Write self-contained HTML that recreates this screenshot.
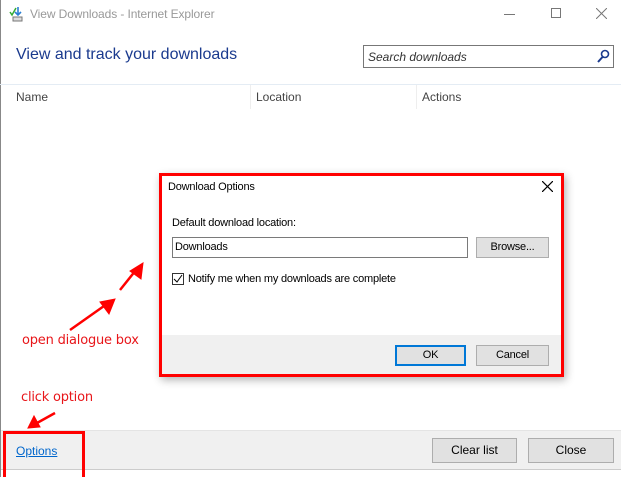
<!DOCTYPE html>
<html><head><style>
*{margin:0;padding:0;box-sizing:border-box}
body{width:621px;height:477px;background:#fff;position:relative;overflow:hidden;font-family:"Liberation Sans",sans-serif;font-size:12px;color:#000}
.a{position:absolute}
.btn{position:absolute;background:#e1e1e1;border:1px solid #adadad;text-align:center;font-size:12px}
.d{font-size:11px;letter-spacing:-0.2px}
.red{color:#e8161a;font-family:"DejaVu Sans",sans-serif;font-size:13px;letter-spacing:-0.2px}
</style></head><body>
<div class="a" style="left:0;top:0;width:1px;height:477px;background:#888"></div>
<svg class="a" style="left:9px;top:6px" width="14" height="16"><path d="M1 6l2 3 4-7" stroke="#3a3" stroke-width="1.5" fill="none"/><path d="M9 1v7M6 6l3 3 3-3" stroke="#2a7fd4" stroke-width="1.6" fill="none"/><rect x="4" y="11" width="9" height="4" fill="#ddd" stroke="#777"/></svg>
<div class="a" style="left:30px;top:7px;color:#999;font-size:12px;letter-spacing:-0.1px">View Downloads - Internet Explorer</div>
<div class="a" style="left:504px;top:14px;width:11px;height:1px;background:#777"></div>
<div class="a" style="left:551px;top:8px;width:10px;height:10px;border:1px solid #777"></div>
<svg class="a" style="left:596px;top:8px" width="11" height="11"><path d="M0 0L11 11M11 0L0 11" stroke="#777"/></svg>
<div class="a" style="left:16px;top:46px;font-size:16px;color:#1a3a8e">View and track your downloads</div>
<div class="a" style="left:363px;top:45px;width:251px;height:23px;border:1px solid #777"></div>
<div class="a" style="left:368px;top:50px;font-style:italic;color:#333">Search downloads</div>
<svg class="a" style="left:597px;top:49px" width="13" height="14"><circle cx="8" cy="5" r="3.5" stroke="#1a3a8e" stroke-width="1.6" fill="none"/><path d="M5.5 8L1 13" stroke="#1a3a8e" stroke-width="2"/></svg>
<div class="a" style="left:0;top:84px;width:621px;height:1px;background:#e4ecf4"></div>
<div class="a" style="left:16px;top:90px;color:#444">Name</div>
<div class="a" style="left:250px;top:85px;width:1px;height:24px;background:#eee"></div>
<div class="a" style="left:256px;top:90px;color:#444">Location</div>
<div class="a" style="left:416px;top:85px;width:1px;height:24px;background:#eee"></div>
<div class="a" style="left:422px;top:90px;color:#444">Actions</div>

<div class="a" style="left:159px;top:173px;width:405px;height:204px;border:3px solid #f00;background:#fff;box-shadow:2px 3px 8px rgba(0,0,0,.3)"></div>
<div class="a" style="left:162px;top:335px;width:399px;height:39px;background:#f0f0f0"></div>
<div class="a d" style="left:168px;top:181px">Download Options</div>
<svg class="a" style="left:542px;top:181px" width="11" height="11"><path d="M0 0L11 11M11 0L0 11" stroke="#000" stroke-width="1.2"/></svg>
<div class="a d" style="left:172px;top:217px">Default download location:</div>
<div class="a" style="left:172px;top:237px;width:296px;height:21px;border:1px solid #7a7a7a"></div>
<div class="a d" style="left:175px;top:241px">Downloads</div>
<div class="btn d" style="left:476px;top:237px;width:73px;height:21px;line-height:19px">Browse...</div>
<div class="a" style="left:172px;top:273px;width:12px;height:12px;border:1px solid #333"></div>
<svg class="a" style="left:173px;top:274px" width="10" height="10"><path d="M1 5l3 3 5-7" stroke="#000" fill="none"/></svg>
<div class="a d" style="left:188px;top:273px">Notify me when my downloads are complete</div>
<div class="btn d" style="left:395px;top:345px;width:71px;height:21px;line-height:17px;border:2px solid #0078d7">OK</div>
<div class="btn d" style="left:476px;top:345px;width:73px;height:21px;line-height:19px">Cancel</div>

<div class="a" style="left:1px;top:430px;width:620px;height:40px;background:#f0f0f0;border-top:1px solid #e4e4e4;border-bottom:1px solid #ccc"></div>
<div class="btn" style="left:432px;top:438px;width:85px;height:25px;line-height:23px">Clear list</div>
<div class="btn" style="left:528px;top:438px;width:86px;height:25px;line-height:23px">Close</div>
<div class="a" style="left:16px;top:444px;color:#0066cc;text-decoration:underline">Options</div>
<div class="a" style="left:3px;top:431px;width:82px;height:46px;border:3px solid #f00;border-bottom:none"></div>

<div class="a red" style="left:22px;top:333px">open dialogue box</div>
<div class="a red" style="left:21px;top:390px">click option</div>
<svg class="a" style="left:0;top:250px" width="160" height="190">
<g stroke="#f00" stroke-width="2.5" fill="#f00">
<path d="M120 40L136 20"/><path d="M143 13L141 29 130 21Z" stroke-width="1"/>
<path d="M70 80L104 56"/><path d="M115 49L109 64 100 52Z" stroke-width="1"/>
<path d="M55 163L37 173"/><path d="M28 178L34 166 40 177Z" stroke-width="1"/>
</g></svg>
</body></html>
